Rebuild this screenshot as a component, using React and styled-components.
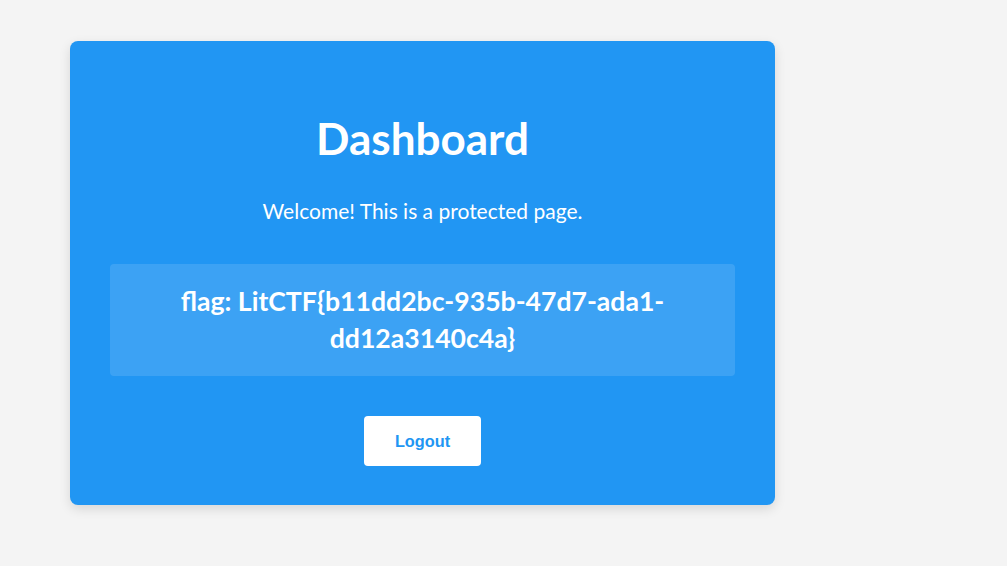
import React from "react";
import styled, { createGlobalStyle } from "styled-components";

const Global = createGlobalStyle`
  html, body { margin: 0; padding: 0; }
  body {
    background: #f4f4f4;
    font-family: Lato, "Noto Sans", sans-serif;
    color: #fff;
  }
`;

const Page = styled.div`
  padding: 41px 0 0 70px;
  min-height: 566px;
  box-sizing: border-box;
`;

const Card = styled.div`
  width: 705px;
  height: 464px;
  box-sizing: border-box;
  background: #2196f3;
  border-radius: 8px;
  box-shadow: 0 4px 12px rgba(0, 0, 0, 0.12);
  padding: 40px;
  display: flex;
  flex-direction: column;
  align-items: center;
  text-align: center;
`;

const Title = styled.h1`
  margin: 30px 0 0;
  font-size: 44px;
  font-weight: 700;
  line-height: 55px;
`;

const Lead = styled.p`
  margin: 32px 0 0;
  font-size: 21px;
  line-height: 26px;
`;

const FlagBox = styled.div`
  margin-top: 40px;
  align-self: stretch;
  background: rgba(255, 255, 255, 0.12);
  border-radius: 4px;
  padding: 19px 20px 19px;
  font-size: 26.6px;
  font-weight: 700;
  line-height: 37px;
`;

const LogoutButton = styled.button`
  margin-top: 40px;
  background: #fff;
  color: #2196f3;
  border: none;
  border-radius: 4px;
  padding: 16px 31px;
  font-family: "Liberation Sans", Arial, sans-serif;
  font-size: 16.3px;
  font-weight: 700;
  line-height: 18px;
  cursor: pointer;
`;

export default function App() {
  return (
    <>
      <Global />
      <Page>
        <Card>
          <Title>Dashboard</Title>
          <Lead>Welcome! This is a protected page.</Lead>
          <FlagBox>flag: LitCTF{"{"}b11dd2bc-935b-47d7-ada1-dd12a3140c4a{"}"}</FlagBox>
          <LogoutButton>Logout</LogoutButton>
        </Card>
      </Page>
    </>
  );
}
